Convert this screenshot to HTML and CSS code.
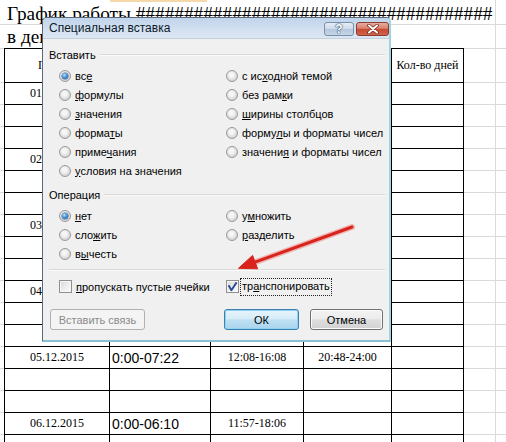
FILE: index.html
```html
<!DOCTYPE html>
<html lang="ru">
<head>
<meta charset="utf-8">
<title>Специальная вставка</title>
<link rel="stylesheet" href="styles.css">
</head>
<body>
<div class="sheet">
  <div class="srow srow-title">График работы #####################################</div>
  <div class="srow srow-sub">в декабре</div>
  <div class="table">
    <div class="c first h">Период</div><div class="c h"></div><div class="c h"></div><div class="c h"></div><div class="c h">Кол-во дней</div>

    <div class="c first">01.12.2015</div><div class="c t"></div><div class="c"></div><div class="c"></div><div class="c"></div>
    <div class="c first"></div><div class="c"></div><div class="c"></div><div class="c"></div><div class="c"></div>
    <div class="c first"></div><div class="c"></div><div class="c"></div><div class="c"></div><div class="c"></div>

    <div class="c first">02.12.2015</div><div class="c t"></div><div class="c"></div><div class="c"></div><div class="c"></div>
    <div class="c first"></div><div class="c"></div><div class="c"></div><div class="c"></div><div class="c"></div>
    <div class="c first"></div><div class="c"></div><div class="c"></div><div class="c"></div><div class="c"></div>

    <div class="c first">03.12.2015</div><div class="c t"></div><div class="c"></div><div class="c"></div><div class="c"></div>
    <div class="c first"></div><div class="c"></div><div class="c"></div><div class="c"></div><div class="c"></div>
    <div class="c first"></div><div class="c"></div><div class="c"></div><div class="c"></div><div class="c"></div>

    <div class="c first">04.12.2015</div><div class="c t"></div><div class="c"></div><div class="c"></div><div class="c"></div>
    <div class="c first"></div><div class="c"></div><div class="c"></div><div class="c"></div><div class="c"></div>
    <div class="c first"></div><div class="c"></div><div class="c"></div><div class="c"></div><div class="c"></div>

    <div class="c first">05.12.2015</div><div class="c t">0:00-07:22</div><div class="c">12:08-16:08</div><div class="c">20:48-24:00</div><div class="c"></div>
    <div class="c first"></div><div class="c"></div><div class="c"></div><div class="c"></div><div class="c"></div>
    <div class="c first"></div><div class="c"></div><div class="c"></div><div class="c"></div><div class="c"></div>

    <div class="c first">06.12.2015</div><div class="c t">0:00-06:10</div><div class="c">11:57-18:06</div><div class="c"></div><div class="c"></div>
    <div class="c first"></div><div class="c"></div><div class="c"></div><div class="c"></div><div class="c"></div>
  </div>
</div>

<div class="dialog">
  <div class="titlebar">
    <span class="title">Специальная вставка</span>
    <div class="tb-buttons">
      <span class="tb-btn tb-help">?</span>
      <span class="tb-btn tb-close"><svg width="14" height="10" viewBox="0 0 14 10"><path d="M3 1.5 L11 8.5 M11 1.5 L3 8.5" stroke="#7a2a1f" stroke-width="3.6" stroke-linecap="round"/><path d="M3 1.5 L11 8.5 M11 1.5 L3 8.5" stroke="#ffffff" stroke-width="2" stroke-linecap="round"/></svg></span>
    </div>
  </div>
  <div class="dlg-body">
    <div class="group-head"><span>Вставить</span><i class="rule"></i></div>
    <div class="opts opts-paste">
      <label class="opt"><span class="radio on"></span><span>вс<u>е</u></span></label>
      <label class="opt"><span class="radio"></span><span><u>ф</u>ормулы</span></label>
      <label class="opt"><span class="radio"></span><span><u>з</u>начения</span></label>
      <label class="opt"><span class="radio"></span><span>форма<u>т</u>ы</span></label>
      <label class="opt"><span class="radio"></span><span>приме<u>ч</u>ания</span></label>
      <label class="opt"><span class="radio"></span><span><u>у</u>словия на значения</span></label>
      <label class="opt"><span class="radio"></span><span>с ис<u>х</u>одной темой</span></label>
      <label class="opt"><span class="radio"></span><span>без рам<u>к</u>и</span></label>
      <label class="opt"><span class="radio"></span><span><u>ш</u>ирины столбцов</span></label>
      <label class="opt"><span class="radio"></span><span>форму<u>л</u>ы и форматы чисел</span></label>
      <label class="opt"><span class="radio"></span><span>значени<u>я</u> и форматы чисел</span></label>
    </div>
    <div class="group-head group-op"><span>Операция</span><i class="rule"></i></div>
    <div class="opts opts-op">
      <label class="opt"><span class="radio on"></span><span><u>н</u>ет</span></label>
      <label class="opt"><span class="radio"></span><span>сло<u>ж</u>ить</span></label>
      <label class="opt"><span class="radio"></span><span>в<u>ы</u>честь</span></label>
      <label class="opt"><span class="radio"></span><span>у<u>м</u>ножить</span></label>
      <label class="opt"><span class="radio"></span><span><u>р</u>азделить</span></label>
    </div>
    <div class="sep"></div>
    <div class="opts opts-check">
      <label class="opt"><span class="check"></span><span><u>п</u>ропускать пустые ячейки</span></label>
      <label class="opt opt-focus"><span class="check on"><svg width="11" height="11" viewBox="0 0 11 11"><path d="M1.6 4.2 L4.4 9.2 L9.6 1.4" fill="none" stroke="#2a4c96" stroke-width="1.9" stroke-linejoin="round"/></svg></span><span class="focus">тр<u>а</u>нспонировать</span></label>
    </div>
    <div class="btn-row">
      <span class="btn disabled">Вставить связь</span>
      <span class="btn default">ОК</span>
      <span class="btn cancel">Отмена</span>
    </div>
  </div>
</div>

<svg class="arrow" width="506" height="442" viewBox="0 0 506 442">
  <line x1="352" y1="227" x2="255" y2="262.2" stroke="rgba(235,70,60,0.35)" stroke-width="6" stroke-linecap="round"/>
  <line x1="352" y1="227" x2="255" y2="262.2" stroke="#d8241c" stroke-width="3" stroke-linecap="round"/>
  <polygon points="238.5,268.3 257.6,268.8 252.6,255.4" fill="#d8241c" stroke="#d8241c" stroke-width="1" stroke-linejoin="round"/>
</svg>
</body>
</html>
```

FILE: styles.css
```css
html, body {
  margin: 0;
  padding: 0;
}

body {
  width: 506px;
  height: 442px;
  overflow: hidden;
  position: relative;
  background-color: #ffffff;
  background-image:
    linear-gradient(#f6d9ab, #f6d9ab),
    linear-gradient(#dadada, #dadada);
  background-repeat: no-repeat, no-repeat;
  background-position: 110px 0, 495px 0;
  background-size: 97px 2px, 1px 100%;
}

.sheet {
  font-family: "Liberation Serif", "Times New Roman", serif;
  color: #000;
}

.srow {
  white-space: nowrap;
  box-sizing: border-box;
  padding-left: 7px;
  overflow: hidden;
}

.srow-title {
  height: 25px;
  font-size: 19.3px;
  line-height: 27px;
  border-bottom: 1px solid #dadada;
}

.srow-sub {
  height: 23px;
  font-size: 19.3px;
  line-height: 24px;
}

.table {
  display: grid;
  grid-template-columns: 106px 101px 93px 88px 72px;
  grid-template-rows: 35px;
  grid-auto-rows: 22px;
  padding-left: 4px;
  background-image:
    linear-gradient(#dadada, #dadada),
    linear-gradient(#dadada, #dadada),
    repeating-linear-gradient(to bottom, transparent 0 21px, #dadada 21px 22px);
  background-repeat: no-repeat;
  background-position: 0 0, 0 34px, 0 35px;
  background-size: 100% 1px, 100% 1px, 100% 400px;
}

.c {
  box-sizing: border-box;
  background: #fff;
  border-right: 1px solid #000;
  border-bottom: 1px solid #000;
  display: flex;
  align-items: center;
  justify-content: center;
  font-size: 12px;
  white-space: nowrap;
  overflow: hidden;
}

.c.first {
  border-left: 1px solid #000;
}

.c.h {
  border-top: 1px solid #000;
}

.c.t {
  justify-content: flex-start;
  padding-left: 2px;
  font-family: "Liberation Sans", Arial, sans-serif;
  font-size: 14px;
}

/* dialog */
.dialog {
  position: absolute;
  left: 42px;
  top: 17px;
  width: 349px;
  height: 325px;
  box-sizing: border-box;
  border-left: 1px solid #59697a;
  border-top: 1px solid #59697a;
  border-right: 2px solid #9fd4e3;
  border-bottom: 2px solid #8dbfd2;
  border-radius: 5px 5px 0 0;
  background: #f0f0f0;
  font-family: "Liberation Sans", Arial, sans-serif;
  font-size: 11px;
  color: #000;
  display: flex;
  flex-direction: column;
}

.titlebar {
  flex: none;
  height: 20px;
  display: flex;
  align-items: center;
  justify-content: space-between;
  padding: 0 0 0 6px;
  background: linear-gradient(#c0d4eb, #d3e1f1 60%, #dbe6f3);
  border-bottom: 1px solid #c4d2e0;
  border-radius: 4px 4px 0 0;
}

.title {
  font-size: 12px;
  color: #0d1a2a;
}

.tb-buttons {
  display: flex;
  gap: 2px;
  margin-top: 1px;
}

.tb-btn {
  height: 14px;
  box-sizing: border-box;
  border-radius: 3px;
  display: flex;
  align-items: center;
  justify-content: center;
}

.tb-help {
  width: 30px;
  border: 1px solid #7a8fa8;
  background: linear-gradient(#e6edf6 0, #cfdbe9 48%, #b6c7dc 52%, #c6d6e8 100%);
  color: #fff;
  font-weight: bold;
  font-size: 12px;
  text-shadow: 0 0 1px #2b4a75, 0 0 1px #2b4a75, 0 0 2px #4d6d96;
}

.tb-close {
  width: 33px;
  border: 1px solid #8c3d32;
  background: linear-gradient(#e8ad9e 0, #d9806b 45%, #c44a30 52%, #d2644b 100%);
}

.dlg-body {
  flex: 1;
  padding: 9px 6px 0 6px;
  display: flex;
  flex-direction: column;
}

.group-head {
  display: flex;
  align-items: center;
  height: 14px;
  line-height: 14px;
  gap: 4px;
}

.group-head .rule {
  flex: 1;
  height: 0;
  border-top: 1px solid #d9d9d9;
  border-bottom: 1px solid #fafafa;
  margin-right: -2px;
}

.group-op {
  margin-top: 8px;
}

.opts {
  display: grid;
  grid-template-columns: 167px 1fr;
  grid-auto-rows: 19px;
  grid-auto-flow: column;
  padding-left: 10px;
  margin-top: 4px;
}

.opts-paste {
  grid-template-rows: repeat(6, 19px);
}

.opts-op {
  grid-template-rows: repeat(3, 19px);
}

.opts-check {
  grid-template-rows: 19px;
  margin-top: 6px;
}

.opt {
  display: flex;
  align-items: center;
  gap: 4px;
  white-space: nowrap;
}

.opt u {
  text-decoration-thickness: 1px;
  text-underline-offset: 1px;
}

.radio {
  flex: none;
  width: 12px;
  height: 12px;
  box-sizing: border-box;
  border-radius: 50%;
  border: 1px solid #9a9a9a;
  background: radial-gradient(circle at 45% 40%, #f6f6f6 0 25%, #dcdcdc 60%, #cfcfcf 80%, #ececec 100%);
  position: relative;
}

.radio.on::after {
  content: "";
  position: absolute;
  left: 2px;
  top: 2px;
  width: 6px;
  height: 6px;
  border-radius: 50%;
  background: radial-gradient(circle at 40% 35%, #bfe2fb 0, #4a8fd0 45%, #1d5597 100%);
  box-shadow: 0 0 0 0.5px #2b5d94;
}

.check {
  flex: none;
  width: 13px;
  height: 13px;
  box-sizing: border-box;
  border: 1px solid #8f8f8f;
  background: linear-gradient(135deg, #d8d8d8 0, #eeeeee 55%, #fbfbfb 100%);
  box-shadow: inset 0 0 0 1px #f6f6f6;
  display: flex;
  align-items: center;
  justify-content: center;
}

.opt-focus {
  gap: 1px;
}

.focus {
  border: 1px dotted #222;
  padding: 1px 1px 2px 1px;
  line-height: 13px;
}

.sep {
  margin-top: 6px;
  border-top: 1px solid #d9d9d9;
  border-bottom: 1px solid #fafafa;
  margin-right: -2px;
}

.btn-row {
  display: flex;
  align-items: center;
  margin-top: 13px;
  padding-left: 1px;
}

.btn {
  height: 21px;
  box-sizing: border-box;
  border: 1px solid #707070;
  border-radius: 3px;
  display: flex;
  align-items: center;
  justify-content: center;
  font-size: 11px;
  background: linear-gradient(#f3f3f3 0, #ececec 46%, #dedede 52%, #d2d2d2 100%);
  box-shadow: inset 0 0 0 1px #fbfbfb;
}

.btn.disabled {
  width: 95px;
  border-color: #adb2b5;
  background: #f4f4f4;
  box-shadow: none;
  color: #8a8a8a;
}

.btn.default {
  width: 75px;
  margin-left: auto;
  border-color: #3c7fb1;
  background: linear-gradient(#e8f4fb 0, #d6ecf8 46%, #bfe0f3 52%, #a9d4ee 100%);
  box-shadow: inset 0 0 0 1px #8ed4f2;
}

.btn.cancel {
  width: 73px;
  margin-left: 11px;
}

.arrow {
  position: absolute;
  left: 0;
  top: 0;
  pointer-events: none;
}
```
